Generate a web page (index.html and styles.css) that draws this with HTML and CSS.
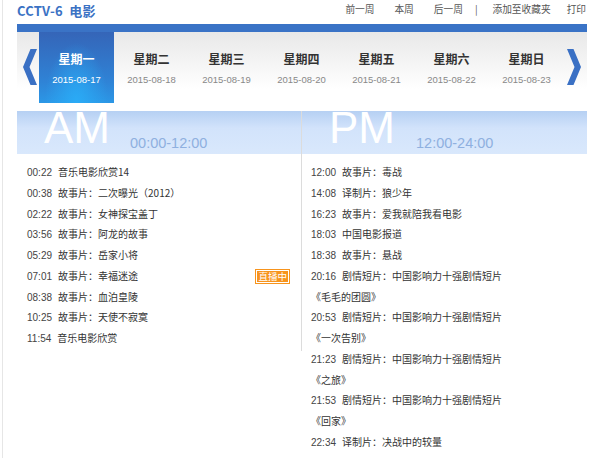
FILE: index.html
```html
<!DOCTYPE html>
<html>
<head>
    <meta charset="utf-8">
    <title>CCTV-6 电影 节目单</title>
    <link rel="stylesheet" href="styles.css">
</head>
<body>
    <div class="page">
        <div class="topbar">
            <h1 class="channel">CCTV-6&nbsp; 电影</h1>
            <div class="nav">
                <a href="#" class="nav-link">前一周</a>
                <a href="#" class="nav-link">本周</a>
                <a href="#" class="nav-link">后一周</a>
                <span class="nav-sep">|</span>
                <a href="#" class="nav-link nav-fav">添加至收藏夹</a>
                <a href="#" class="nav-link nav-print">打印</a>
            </div>
        </div>

        <div class="week-bar"></div>
        <div class="week">
            <a href="#" class="arrow">
                <svg width="14" height="36" viewBox="0 0 14 36"><polygon points="14,0 7.5,0 0,18 7.5,36 14,36 6.5,18" fill="#3a70c4"/></svg>
            </a>
            <div class="days">
                <a href="#" class="day active"><span class="day-name">星期一</span><span class="day-date">2015-08-17</span></a>
                <a href="#" class="day"><span class="day-name">星期二</span><span class="day-date">2015-08-18</span></a>
                <a href="#" class="day"><span class="day-name">星期三</span><span class="day-date">2015-08-19</span></a>
                <a href="#" class="day"><span class="day-name">星期四</span><span class="day-date">2015-08-20</span></a>
                <a href="#" class="day"><span class="day-name">星期五</span><span class="day-date">2015-08-21</span></a>
                <a href="#" class="day"><span class="day-name">星期六</span><span class="day-date">2015-08-22</span></a>
                <a href="#" class="day"><span class="day-name">星期日</span><span class="day-date">2015-08-23</span></a>
            </div>
            <a href="#" class="arrow arrow-right">
                <svg width="14" height="36" viewBox="0 0 14 36"><polygon points="0,0 6.5,0 14,18 6.5,36 0,36 7.5,18" fill="#3a70c4"/></svg>
            </a>
        </div>

        <div class="schedule">
            <div class="half half-am">
                <div class="half-head">
                    <span class="big">AM</span>
                    <span class="range">00:00-12:00</span>
                </div>
                <ul class="programs">
                    <li><span class="time">00:22</span>音乐电影欣赏14</li>
                    <li><span class="time">00:38</span>故事片：二次曝光（2012）</li>
                    <li><span class="time">02:22</span>故事片：女神探宝盖丁</li>
                    <li><span class="time">03:56</span>故事片：阿龙的故事</li>
                    <li><span class="time">05:29</span>故事片：岳家小将</li>
                    <li class="live"><span><span class="time">07:01</span>故事片：幸福迷途</span><span class="badge"><span>直播中</span></span></li>
                    <li><span class="time">08:38</span>故事片：血泊皇陵</li>
                    <li><span class="time">10:25</span>故事片：天使不寂寞</li>
                    <li><span class="time">11:54</span>音乐电影欣赏</li>
                </ul>
            </div>
            <div class="half half-pm">
                <div class="half-head">
                    <span class="big">PM</span>
                    <span class="range">12:00-24:00</span>
                </div>
                <ul class="programs">
                    <li><span class="time">12:00</span>故事片：毒战</li>
                    <li><span class="time">14:08</span>译制片：狼少年</li>
                    <li><span class="time">16:23</span>故事片：爱我就陪我看电影</li>
                    <li><span class="time">18:03</span>中国电影报道</li>
                    <li><span class="time">18:38</span>故事片：悬战</li>
                    <li><span class="time">20:16</span>剧情短片：中国影响力十强剧情短片<br>《毛毛的团圆》</li>
                    <li><span class="time">20:53</span>剧情短片：中国影响力十强剧情短片<br>《一次告别》</li>
                    <li><span class="time">21:23</span>剧情短片：中国影响力十强剧情短片<br>《之旅》</li>
                    <li><span class="time">21:53</span>剧情短片：中国影响力十强剧情短片<br>《回家》</li>
                    <li><span class="time">22:34</span>译制片：决战中的较量</li>
                </ul>
            </div>
        </div>
    </div>
</body>
</html>
```

FILE: styles.css
```css
body {
    margin: 0;
    background-color: #ffffff;
    color: #333333;
    font-family: "Liberation Sans", "Noto Sans CJK SC", sans-serif;
    font-size: 10px;
}

a {
    color: inherit;
    text-decoration: none;
}

.page {
    margin-left: 2px;
    padding-left: 14px;
    width: 570px;
    min-height: 458px;
    border-left: 1px solid #e6e6e6;
}

.topbar {
    display: flex;
    justify-content: space-between;
    align-items: center;
    height: 24px;
}

.channel {
    margin: 0;
    margin-top: -4px;
    color: #3b72c4;
    font-family: "Noto Sans CJK SC", sans-serif;
    font-size: 13px;
    font-weight: bold;
    letter-spacing: 0.2px;
}

.nav {
    display: flex;
    align-items: center;
    margin-top: -6px;
    color: #555555;
    font-family: "Noto Sans CJK SC", sans-serif;
    font-size: 9.7px;
}

.nav-link {
    margin-left: 20px;
}

.nav-sep {
    margin-left: 12px;
}

.nav-fav {
    margin-left: 15px;
}

.nav-print {
    margin-left: 16px;
    margin-right: 1px;
}

.week-bar {
    height: 8px;
    background-color: #3a73c6;
}

.week {
    display: flex;
    height: 71px;
    background: linear-gradient(#e8e8e8, #ffffff 80%);
}

.arrow {
    display: flex;
    align-items: center;
    justify-content: flex-end;
    width: 22px;
    padding-bottom: 1px;
}

.arrow svg {
    margin-right: 2px;
}

.arrow-right {
    justify-content: flex-start;
    width: 23px;
}

.arrow-right svg {
    margin-right: 0;
    margin-left: 3px;
}

.days {
    display: flex;
    flex: 1;
}

.day {
    display: flex;
    flex-direction: column;
    align-items: center;
    width: 75px;
    padding-top: 19px;
    box-sizing: border-box;
}

.day-name {
    color: #333333;
    font-family: "Noto Sans CJK SC", sans-serif;
    font-size: 12px;
    font-weight: bold;
    line-height: 16px;
}

.day-date {
    margin-top: 7px;
    color: #888888;
    font-size: 9.5px;
    line-height: 12px;
}

.day.active {
    background: radial-gradient(ellipse at 50% 100%, #2aabf6 0%, rgba(42, 171, 246, 0) 60%),
                linear-gradient(#3565b8, #2f83d6 70%, #2b97e6);
}

.day.active .day-name,
.day.active .day-date {
    color: #ffffff;
}

.schedule {
    display: flex;
    align-items: flex-start;
    margin-top: 8px;
}

.half {
    flex: 1;
}

.half-am {
    flex: 0 0 284px;
    border-right: 1px solid #dcdcdc;
    padding-bottom: 2px;
}

.half-head {
    display: flex;
    align-items: flex-start;
    height: 43px;
    padding-left: 27px;
    background: linear-gradient(#b6d0f3, #d2e3fb 40%, #d9e8fc);
}

.big {
    color: #ffffff;
    font-size: 44px;
    line-height: 34px;
}

.range {
    margin-left: 20px;
    margin-top: 24px;
    color: #8fb0e0;
    font-size: 14.5px;
    line-height: 16px;
}

.half-pm .range {
    margin-left: 21px;
}

.programs {
    list-style: none;
    margin: 0;
    padding: 8px 0 0 10px;
}

.half-pm .programs {
    padding-left: 9px;
}

.programs li {
    line-height: 20.75px;
    font-family: "Noto Sans CJK SC", sans-serif;
    color: #333333;
}

.time {
    margin-right: 6px;
    color: #444444;
    font-family: "Liberation Sans", sans-serif;
    line-height: 10px;
}

.programs li.live {
    display: flex;
    justify-content: space-between;
    align-items: center;
    padding-right: 11px;
}

.badge {
    display: inline-block;
    padding: 1px;
    background-color: #f7941d;
    line-height: 11px;
}

.badge span {
    display: block;
    padding: 0 1px;
    border: 1px solid #ffffff;
    color: #ffffff;
    font-size: 9.5px;
}
```
